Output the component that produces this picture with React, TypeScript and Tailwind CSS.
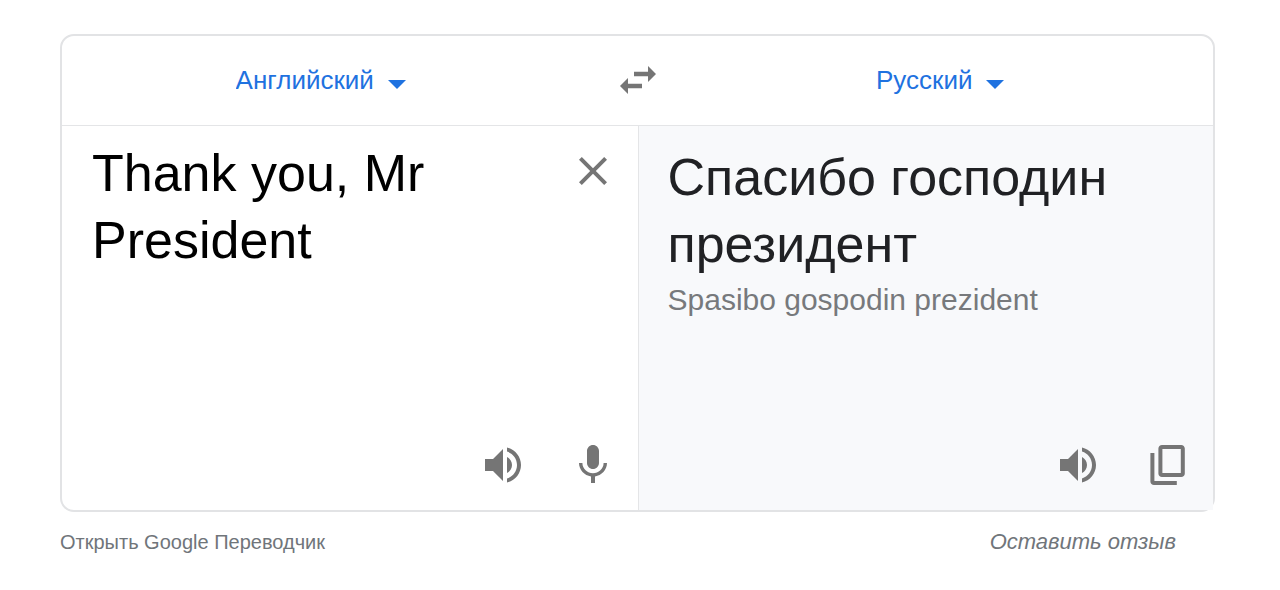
import { useState } from "react";

const icons = {
  swap: "M6.99 11L3 15l3.99 4v-2.9H14v-2.2H6.99V11zM21 9l-3.99-4v2.9H10v2.2h7.01V13L21 9z",
  close:
    "M19 6.41L17.59 5 12 10.59 6.41 5 5 6.41 10.59 12 5 17.59 6.41 19 12 13.41 17.59 19 19 17.59 13.41 12z",
  volume:
    "M3 9v6h4l5 5V4L7 9H3zm13.5 3c0-1.77-1.02-3.29-2.5-4.03v8.05c1.48-.73 2.5-2.25 2.5-4.02zM14 3.23v2.06c2.89.86 5 3.54 5 6.71s-2.11 5.85-5 6.71v2.06c4.01-.91 7-4.49 7-8.77s-2.99-7.86-7-8.77z",
  mic: "M12 14c1.66 0 2.99-1.34 2.99-3L15 5c0-1.66-1.34-3-3-3S9 3.34 9 5v6c0 1.66 1.34 3 3 3zm5.3-3c0 3-2.54 5.1-5.3 5.1S6.7 14 6.7 11H5c0 3.41 2.72 6.23 6 6.72V21h2v-3.28c3.28-.48 6-3.3 6-6.72h-1.7z",
  copy: "M18.6 2H9C8 2 7.2 2.8 7.2 3.8v12.4c0 1 .8 1.8 1.8 1.8h9.6c1 0 1.8-.8 1.8-1.8V3.8c0-1-.8-1.8-1.8-1.8zm-.2 14H9.2V4h9.2v12zM3.2 6h2v14h11.2v2H5c-1 0-1.8-.8-1.8-1.8V6z",
};

function IconButton({ icon, label, onClick }: { icon: keyof typeof icons; label: string; onClick?: () => void }) {
  return (
    <button
      type="button"
      aria-label={label}
      onClick={onClick}
      className="size-12 shrink-0 flex items-center justify-center text-[#757575] cursor-pointer"
    >
      <svg viewBox="0 0 24 24" className="size-12" fill="currentColor" aria-hidden="true">
        <path d={icons[icon]} />
      </svg>
    </button>
  );
}

function LanguageSelect({
  label,
  value,
  onChange,
}: {
  label: string;
  value: string;
  onChange: (value: string) => void;
}) {
  return (
    <div className="flex items-center gap-3.5 text-[#1f72e0]">
      <select
        aria-label={label}
        value={value}
        onChange={(e) => onChange(e.target.value)}
        className="appearance-none field-sizing-content bg-transparent text-[26px] leading-9 cursor-pointer"
      >
        <option>Английский</option>
        <option>Русский</option>
      </select>
      <svg viewBox="0 0 18 9" className="w-[18px] mt-2.5 pointer-events-none" fill="currentColor" aria-hidden="true">
        <path d="M0 0h18L9 9z" />
      </svg>
    </div>
  );
}

export default function App() {
  const [from, setFrom] = useState("Английский");
  const [to, setTo] = useState("Русский");
  const [text, setText] = useState("Thank you, Mr President");

  const swap = () => {
    setFrom(to);
    setTo(from);
  };

  return (
    <main className="bg-white pl-[60px] pr-[65px] pt-[34px] font-['Liberation_Sans',Arial,sans-serif]">
      <div className="border-2 border-[#e2e3e5] rounded-[14px]">
        <div className="grid grid-cols-[1fr_116px_1fr] items-center h-[90px] pb-0.5 border-b border-[#e4e5e7]">
          <div className="flex justify-center">
            <LanguageSelect label="Язык оригинала" value={from} onChange={setFrom} />
          </div>
          <div className="flex justify-center">
            <IconButton icon="swap" label="Поменять языки" onClick={swap} />
          </div>
          <div className="flex justify-center pr-7">
            <LanguageSelect label="Язык перевода" value={to} onChange={setTo} />
          </div>
        </div>

        <div className="grid grid-cols-2 min-h-96">
          <section className="flex flex-col justify-between pl-[30px] pr-[21px] pb-[21px]">
            <div className="flex items-start">
              <textarea
                aria-label="Введите текст"
                rows={3}
                value={text}
                onChange={(e) => setText(e.target.value)}
                className="grow min-w-0 mt-3.5 resize-none outline-none bg-transparent text-[52px] leading-[67px] text-black"
              />
              <div className="pt-[21px]">
                <IconButton icon="close" label="Очистить" onClick={() => setText("")} />
              </div>
            </div>
            <div className="flex justify-end gap-[42px]">
              <IconButton icon="volume" label="Прослушать" />
              <IconButton icon="mic" label="Голосовой ввод" />
            </div>
          </section>

          <section className="flex flex-col justify-between bg-[#f8f9fb] border-l border-[#e4e5e7] pl-[29px] pr-[21px] pb-[21px]">
            <div className="pt-[18px]">
              <p className="max-w-[480px] text-[52px] leading-[67px] text-[#202124]">Спасибо господин президент</p>
              <p className="text-[30px] leading-[44px] text-[#77797c]">Spasibo gospodin prezident</p>
            </div>
            <div className="flex justify-end gap-[42px]">
              <IconButton icon="volume" label="Прослушать перевод" />
              <IconButton icon="copy" label="Копировать" />
            </div>
          </section>
        </div>
      </div>

      <footer className="flex items-center justify-between pt-3.5 pr-[39px] leading-8 text-[#70757a]">
        <a href="#translate" className="text-[20px]">
          Открыть Google Переводчик
        </a>
        <a href="#feedback" className="text-[22px] italic">
          Оставить отзыв
        </a>
      </footer>
    </main>
  );
}
